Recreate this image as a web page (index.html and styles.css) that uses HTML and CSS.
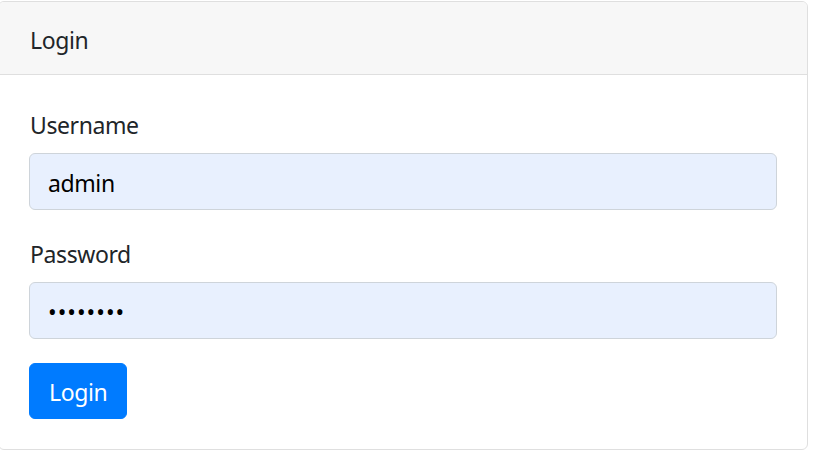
FILE: index.html
```html
<!DOCTYPE html>
<html>
<head>
<meta charset="utf-8">
<link rel="stylesheet" href="styles.css">
</head>
<body>
<div class="card">
  <div class="card-header">Login</div>
  <div class="card-body">
    <form class="login-form">
      <div class="form-group">
        <label class="form-label" for="username">Username</label>
        <input class="form-control" id="username" type="text" value="admin">
      </div>
      <div class="form-group">
        <label class="form-label" for="password">Password</label>
        <input class="form-control password" id="password" type="password" value="password">
      </div>
      <button class="btn-primary" type="button">Login</button>
    </form>
  </div>
</div>
</body>
</html>
```

FILE: styles.css
```css
* { box-sizing: border-box; }
html, body { margin: 0; padding: 0; background: #fff; }
body {
  font-family: "Noto Sans", "Open Sans", "Liberation Sans", sans-serif;
  font-size: 23px;
  letter-spacing: -0.4px;
  line-height: 36px;
  color: #212529;
}
.card {
  margin: 1px 0 0 -2px;
  width: 810px;
  border: 1px solid #dfdfdf;
  border-radius: 6px;
  background: #fff;
  overflow: hidden;
}
.card-header {
  background: #f7f7f7;
  border-bottom: 1px solid #dfdfdf;
  padding: 20px 30px 16px 31px;
  height: 73px;
}
.card-body {
  padding: 30px;
}
.login-form { margin: 0; display: flex; flex-direction: column; align-items: flex-start; }
.form-group {
  display: flex;
  flex-direction: column;
  margin-bottom: 24px;
  width: 100%;
}
.form-label {
  display: block;
  margin-bottom: 12px;
  height: 36px;
  padding: 2px 0 0 1px;
}
.form-control {
  display: block;
  width: 100%;
  height: 57px;
  padding: 10px 18px 8px;
  font: inherit;
  letter-spacing: -0.4px;
  color: #000;
  background: #e8f0fe;
  border: 1px solid #ced4da;
  border-radius: 6px;
  outline: none;
}
.password { letter-spacing: 1px; }
.btn-primary {
  font: inherit;
  letter-spacing: -0.4px;
  color: #fff;
  background: #007bff;
  border: 1px solid #007bff;
  border-radius: 6px;
  height: 56px;
  padding: 10px 19px 8px;
  cursor: pointer;
}
```
